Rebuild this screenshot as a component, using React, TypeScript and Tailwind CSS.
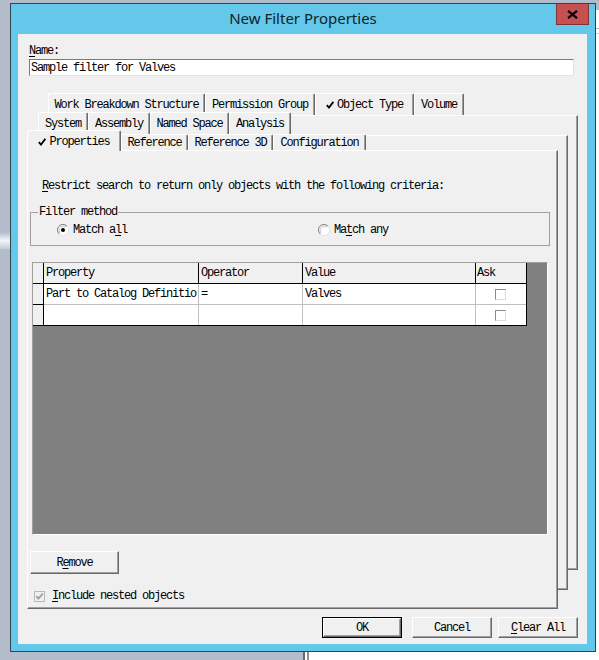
import React from "react";

// bitmap-ish dialog font: 6px per glyph, 12px line
const sim = "font-['Liberation_Mono',monospace] text-[12px] leading-[12px] tracking-[-1.2px] text-black whitespace-pre";

const raised = "bg-[#f0f0f0] border-t border-l border-white border-r border-b border-r-[#696969] border-b-[#696969] shadow-[inset_-1px_-1px_0_#a0a0a0]";

const Check = () => (
  <svg width="8" height="8" viewBox="0 0 8 8" className="mr-[3px] shrink-0">
    <path d="M0.8 4.2 L3 6.6 L7.4 0.8" fill="none" stroke="#000" strokeWidth="1.8" />
  </svg>
);

const Tab = ({
  label,
  w,
  checked,
  h = "h-[22px]",
  extra = "",
}: {
  label: string;
  w: string;
  checked?: boolean;
  h?: string;
  extra?: string;
}) => (
  <div
    className={`${w} ${h} ${extra} flex items-center justify-center bg-[#f0f0f0] border-t border-l border-white border-r border-r-[#696969] shadow-[inset_-1px_0_0_#a0a0a0] rounded-tl-[2px] rounded-tr-[2px] shrink-0`}
  >
    {checked && <Check />}
    <span className={sim}>{label}</span>
  </div>
);

const Radio = ({ on }: { on?: boolean }) => (
  <svg width="12" height="12" viewBox="0 0 12 12" className="shrink-0">
    <circle cx="6" cy="6" r="5.5" fill="#fff" stroke="#e3e3e3" />
    <path d="M2.1 9.9 A5.5 5.5 0 0 1 9.9 2.1" fill="none" stroke="#808080" />
    <path d="M3 9 A4.3 4.3 0 0 1 9 3" fill="none" stroke="#c8c8c8" />
    {on && <circle cx="6" cy="6" r="2" fill="#000" />}
  </svg>
);

const Box = () => (
  <div className="w-[11px] h-[11px] bg-white border-t border-l border-[#8a8a8a] border-r border-b border-r-[#dcdcdc] border-b-[#dcdcdc]" />
);

const U = ({ children }: { children: React.ReactNode }) => <span className="underline underline-offset-2">{children}</span>;

const Cell = ({ w, line, children }: { w: string; line: string; children?: React.ReactNode }) => (
  <div className={`${w} h-full border-r ${line} flex items-center pl-[2px] shrink-0`}>{children}</div>
);

const Button = ({ w, children, def }: { w: string; children: React.ReactNode; def?: boolean }) => (
  <div className={`${w} h-[21px] ${def ? "border border-black" : ""} shrink-0`}>
    <div className={`w-full h-full ${raised} flex items-center justify-center`}>
      <span className={sim}>{children}</span>
    </div>
  </div>
);

export default function App() {
  return (
    <div className="relative w-[599px] h-[660px] bg-[#b3bccb] overflow-hidden">
      {/* windows behind the dialog */}
      <div className="absolute left-[596px] top-[10px] w-[10px] h-[660px] bg-white">
        <div className="mt-[18px] h-[1px] bg-[#b0b0b0]" />
        <div className="mt-[4px] h-[1px] bg-[#d0d0d0]" />
      </div>
      <div className="absolute left-[303px] top-[652px] w-[300px] h-[20px] bg-white border-l-2 border-[#6a6a6a] flex">
        <div className="ml-[2px] w-[2px] h-full bg-[#909090]" />
      </div>
      <div className="absolute left-0 top-[232px] w-[10px] h-[17px] bg-gradient-to-b from-[#b3bccb] via-[#f2f5fa] to-[#c4ccd9]" />

      {/* dialog */}
      <div className="relative ml-[10px] mt-[3px] w-[586px] h-[649px] border border-[#2d4656] bg-[#63c8e9] flex flex-col">
        <div className="h-[30px] flex items-center justify-center">
          <span className="font-['Noto_Sans',sans-serif] text-[15px] text-[#10222c] leading-none -mt-[2px]">
            New Filter Properties
          </span>
        </div>
        <div className="absolute right-[6px] top-0 w-[33px] h-[21px] bg-[#c75050] border border-[#7c3434] border-t-0 flex items-center justify-center">
          <svg width="11" height="9" viewBox="0 0 11 9">
            <path d="M1 0.8 L10 8.2 M10 0.8 L1 8.2" stroke="#000" strokeWidth="2.2" />
          </svg>
        </div>

        {/* client area */}
        <div className="mx-[7px] w-[569px] h-[610px] bg-[#f0f0f0] flex flex-col pl-[11px] pt-[11px]">
          <div className={sim}>
            <U>N</U>ame:
          </div>
          <div className="mt-[2px] w-[545px] h-[17px] bg-white border-t border-l border-[#7a7a7a] border-r border-b border-r-[#e3e3e3] border-b-[#e3e3e3] flex items-center pl-[1px]">
            <span className={sim}>Sample filter for Valves</span>
          </div>

          {/* tab control */}
          <div className="relative mt-[17px] -ml-[2px] w-[551px] h-[516px] flex flex-col">
            <div className="absolute left-[21px] top-[22px] right-0 bottom-[39px] bg-[#f0f0f0] border-t border-l border-white border-r border-b border-r-[#696969] border-b-[#696969] shadow-[inset_-1px_-1px_0_#a0a0a0]" />
            <div className="absolute left-[11px] top-[42px] right-[10px] bottom-[19px] bg-[#f0f0f0] border-t border-l border-white border-r border-b border-r-[#696969] border-b-[#696969] shadow-[inset_-1px_-1px_0_#a0a0a0]" />

            <div className="relative h-[22px] pl-[21px] flex">
              <Tab w="w-[157px]" label="Work Breakdown Structure" />
              <Tab w="w-[110px]" label="Permission Group" />
              <Tab w="w-[99px]" label="Object Type" checked />
              <Tab w="w-[50px]" label="Volume" />
            </div>
            <div className="relative -mt-[3px] h-[22px] pl-[11px] flex">
              <Tab w="w-[50px]" label="System" />
              <Tab w="w-[62px]" label="Assembly" />
              <Tab w="w-[79px]" label="Named Space" />
              <Tab w="w-[62px]" label="Analysis" />
            </div>
            <div className="relative z-10 -mt-[4px] h-[21px] flex items-start">
              <Tab w="w-[94px]" h="h-[21px]" extra="pt-[2px]" label="Properties" checked />
              <Tab w="w-[67px]" h="h-[16px]" extra="mt-[4px]" label="Reference" />
              <Tab w="w-[85px]" h="h-[16px]" extra="mt-[4px]" label="Reference 3D" />
              <Tab w="w-[93px]" h="h-[16px]" extra="mt-[4px]" label="Configuration" />
            </div>

            {/* current page */}
            <div className="relative -mt-[1px] w-[531px] h-[459px] bg-[#f0f0f0] border-t border-l border-white border-r border-b border-r-[#696969] border-b-[#696969] shadow-[inset_-1px_-1px_0_#a0a0a0] flex flex-col pl-[2px]">
              <div className={`${sim} mt-[29px] ml-[12px]`}>
                <U>R</U>estrict search to return only objects with the following criteria:
              </div>

              <div className="relative mt-[20px] w-[520px] h-[34px] border border-[#a0a0a0] flex items-start pt-[11px]">
                <span className={`${sim} absolute -top-[7px] left-[7px] bg-[#f0f0f0] pl-[1px] pr-[1px]`}>Filter method</span>
                <div className="ml-[26px] w-[261px] flex items-center gap-[4px]">
                  <Radio on />
                  <span className={sim}>
                    Match a<U>l</U>l
                  </span>
                </div>
                <div className="flex items-center gap-[4px]">
                  <Radio />
                  <span className={sim}>
                    Ma<U>t</U>ch any
                  </span>
                </div>
              </div>

              {/* criteria grid */}
              <div className="mt-[16px] ml-[2px] w-[516px] h-[273px] bg-[#808080] border-t border-l border-[#a0a0a0] border-r border-b border-r-white border-b-white">
                <div className="w-[494px] bg-white border-r border-b border-black">
                  <div className="h-[21px] bg-[#f0f0f0] border-b border-black flex">
                    <Cell w="w-[11px]" line="border-black" />
                    <Cell w="w-[155px]" line="border-black">
                      <span className={sim}>Property</span>
                    </Cell>
                    <Cell w="w-[104px]" line="border-black">
                      <span className={sim}>Operator</span>
                    </Cell>
                    <Cell w="w-[173px]" line="border-black">
                      <span className={sim}>Value</span>
                    </Cell>
                    <div className="flex items-center pl-[1px]">
                      <span className={sim}>Ask</span>
                    </div>
                  </div>
                  <div className="h-[21px] flex">
                    <div className="w-[11px] h-full bg-[#f0f0f0] border-r border-b border-black shrink-0" />
                    <div className="flex-1 flex border-b border-[#c0c0c0]">
                      <Cell w="w-[155px]" line="border-[#c0c0c0]">
                        <span className={sim}>Part to Catalog Definitio</span>
                      </Cell>
                      <Cell w="w-[104px]" line="border-[#c0c0c0]">
                        <span className={sim}>=</span>
                      </Cell>
                      <Cell w="w-[173px]" line="border-[#c0c0c0]">
                        <span className={sim}>Valves</span>
                      </Cell>
                      <div className="flex items-center pl-[19px]">
                        <Box />
                      </div>
                    </div>
                  </div>
                  <div className="h-[20px] flex">
                    <div className="w-[11px] h-full bg-[#f0f0f0] border-r border-black shrink-0" />
                    <Cell w="w-[155px]" line="border-[#c0c0c0]" />
                    <Cell w="w-[104px]" line="border-[#c0c0c0]" />
                    <Cell w="w-[173px]" line="border-[#c0c0c0]" />
                    <div className="flex items-center pl-[19px]">
                      <Box />
                    </div>
                  </div>
                </div>
              </div>

              <div className={`mt-[16px] w-[89px] h-[23px] ${raised} flex items-center justify-center`}>
                <span className={sim}>
                  R<U>e</U>move
                </span>
              </div>

              <div className="mt-[16px] ml-[4px] flex items-center gap-[7px]">
                <svg width="11" height="11" viewBox="0 0 11 11" className="shrink-0">
                  <rect x="0.5" y="0.5" width="10" height="10" fill="#f0f0f0" stroke="#b8b8b8" />
                  <path d="M2.3 5.2 L4.4 7.6 L8.8 2.6" fill="none" stroke="#a0a0a0" strokeWidth="1.8" />
                </svg>
                <span className={`${sim} text-[#a0a0a0]`}>
                  <U>I</U>nclude nested objects
                </span>
              </div>
            </div>
          </div>

          {/* dialog buttons */}
          <div className="mt-[8px] w-[549px] flex justify-end">
            <Button w="w-[80px]" def>
              OK
            </Button>
            <div className="w-[10px]" />
            <Button w="w-[80px]">Cancel</Button>
            <div className="w-[6px]" />
            <Button w="w-[80px]">
              <U>C</U>lear All
            </Button>
          </div>
        </div>
      </div>
    </div>
  );
}
